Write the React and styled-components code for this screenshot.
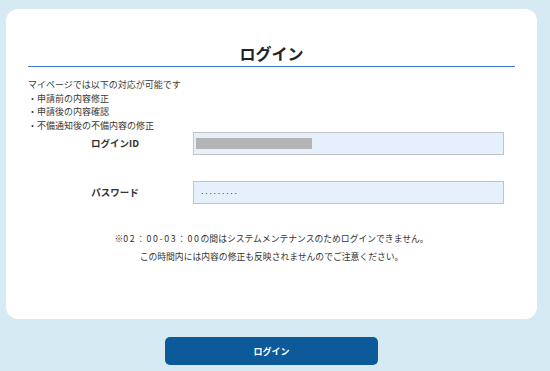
import React from "react";
import styled, { createGlobalStyle } from "styled-components";

const GlobalStyle = createGlobalStyle`
  html, body {
    margin: 0;
    padding: 0;
    background: #d6eaf4;
  }
  body {
    font-family: "Noto Sans CJK JP", "Noto Sans", sans-serif;
    color: #333;
  }
`;

const Page = styled.div`
  width: 550px;
  height: 371px;
  box-sizing: border-box;
  padding: 9px 13px 0 6px;
  overflow: hidden;
`;

const Card = styled.div`
  height: 310px;
  box-sizing: border-box;
  background: #fff;
  border-radius: 12px;
  padding: 34px 22px 0;
`;

const Title = styled.h1`
  margin: 0;
  font-size: 16px;
  line-height: 20px;
  font-weight: 700;
  color: #222;
  text-align: center;
  padding-bottom: 3px;
  border-bottom: 1.5px solid #3a7fc1;
`;

const Intro = styled.div`
  margin-top: 11px;
  font-size: 9px;
  line-height: 13.5px;
  color: #3a3a3a;
`;

const Form = styled.div`
  display: grid;
  grid-template-columns: 165px 1fr;
  row-gap: 26px;
  margin-right: 11px;
`;

const Label = styled.div`
  font-size: 9.5px;
  font-weight: 700;
  color: #333;
  text-align: center;
  padding: 4px 0 0 9px;
  line-height: 14px;
`;

const InputBox = styled.div`
  height: 23px;
  box-sizing: border-box;
  background: #e6effc;
  border: 1px solid #c2c4c8;
  display: flex;
  align-items: center;
  padding: 0 2px;
`;

const Redacted = styled.span`
  display: block;
  width: 116px;
  height: 11px;
  background: #b4b4b4;
`;

const Dots = styled.span`
  margin-left: 4px;
  font-size: 8px;
  letter-spacing: -0.3px;
  color: #333;
`;

const Notice = styled.div`
  margin-top: 26px;
  font-size: 8.8px;
  line-height: 18px;
  text-align: center;
  color: #333;
`;

const Time = styled.span`
  letter-spacing: 1.6px;
`;

const ButtonRow = styled.div`
  display: flex;
  justify-content: center;
  padding-top: 18px;
`;

const LoginButton = styled.button`
  width: 213px;
  height: 28px;
  border: none;
  border-radius: 5px;
  background: #0d5a9a;
  color: #fff;
  font-family: "Noto Sans CJK JP", sans-serif;
  font-size: 9px;
  font-weight: 700;
  cursor: pointer;
`;

export default function App() {
  return (
    <>
      <GlobalStyle />
      <Page>
        <Card>
          <Title>ログイン</Title>
          <Intro>
            <div>マイページでは以下の対応が可能です</div>
            <div>・申請前の内容修正</div>
            <div>・申請後の内容確認</div>
            <div>・不備通知後の不備内容の修正</div>
          </Intro>
          <Form>
            <Label>ログインID</Label>
            <InputBox>
              <Redacted />
            </InputBox>
            <Label>パスワード</Label>
            <InputBox>
              <Dots>·········</Dots>
            </InputBox>
          </Form>
          <Notice>
            <div>
              ※<Time>02：00-03：00</Time>の間はシステムメンテナンスのためログインできません。
            </div>
            <div>この時間内には内容の修正も反映されませんのでご注意ください。</div>
          </Notice>
        </Card>
        <ButtonRow>
          <LoginButton>ログイン</LoginButton>
        </ButtonRow>
      </Page>
    </>
  );
}
